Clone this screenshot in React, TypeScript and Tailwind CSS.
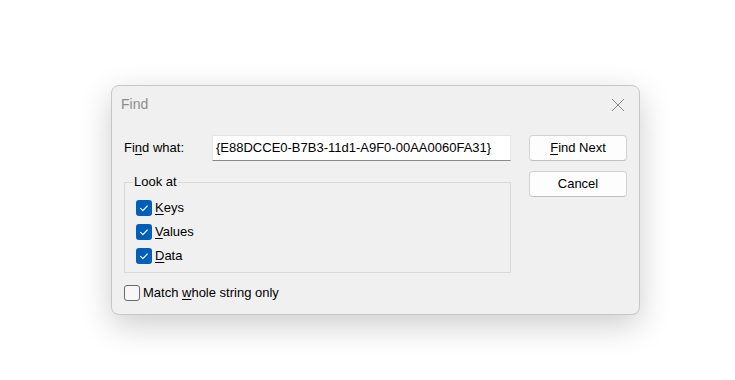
import React from "react";

function Checked() {
  return (
    <span className="w-[16px] h-[16px] rounded-[3px] bg-[#005fb8] flex items-center justify-center shrink-0">
      <svg width="16" height="16" viewBox="0 0 16 16">
        <path d="M4.6 8.4l2.3 2.3 4.4-4.7" fill="none" stroke="white" strokeWidth="1.1" strokeLinecap="round" strokeLinejoin="round" />
      </svg>
    </span>
  );
}

function CheckRow({ first, rest }: { first: string; rest: string }) {
  return (
    <div className="flex items-center h-[16px]">
      <Checked />
      <span className="ml-[3px] text-[13px] leading-[16px] text-[#000]">
        <u className="underline-offset-[2px]">{first}</u>
        {rest}
      </span>
    </div>
  );
}

export default function App() {
  return (
    <div
      className="w-[735px] h-[380px] bg-white pt-[85px] pl-[111px]"
      style={{ fontFamily: '"Liberation Sans", Arial, sans-serif' }}
    >
      <div className="w-[529px] h-[230px] bg-[#f0f0f0] border border-[#c6c6c6] rounded-[8px] shadow-[0_10px_32px_rgba(0,0,0,0.2)] flex flex-col">
        <div className="h-[35px] flex items-center justify-between pl-[9px] pr-[14px] pt-[2px]">
          <span className="text-[14px] text-[#8c8c8c]">Find</span>
          <svg width="14" height="14" viewBox="0 0 14 14">
            <path d="M1 1L13 13M13 1L1 13" stroke="#8a8a8a" strokeWidth="1" />
          </svg>
        </div>
        <div className="flex pl-[12px] pr-[12px] pt-[14px]">
          <div className="w-[387px] flex flex-col">
            <div className="flex items-center h-[26px]">
              <span className="w-[88px] text-[13px] text-[#000]">
                Fi<u className="underline-offset-[2px]">n</u>d what:
              </span>
              <div className="w-[299px] h-[26px] bg-white border border-[#e5e5e5] border-b-[#8a8a8a] flex items-center pl-[3px] text-[13px] text-[#000]">
                {"{E88DCCE0-B7B3-11d1-A9F0-00AA0060FA31}"}
              </div>
            </div>
            <div className="relative mt-[21px] h-[91px] border border-[#d9d9d9] pt-[17px] pl-[11px] flex flex-col gap-[8px]">
              <span className="absolute left-[8px] top-[-9px] px-[1px] bg-[#f0f0f0] text-[13px] leading-[16px] text-[#000]">
                Look at
              </span>
              <CheckRow first="K" rest="eys" />
              <CheckRow first="V" rest="alues" />
              <CheckRow first="D" rest="ata" />
            </div>
            <div className="flex items-center mt-[12px] h-[15px]">
              <span className="w-[16px] h-[16px] rounded-[3px] border border-[#6a6a6a] bg-[#f7f7f7] shrink-0" />
              <span className="ml-[3px] text-[13px] leading-[16px] text-[#000]">
                Match <u className="underline-offset-[2px]">w</u>hole string only
              </span>
            </div>
          </div>
          <div className="ml-[18px] w-[98px] flex flex-col gap-[10px]">
            <button className="h-[26px] w-full bg-[#fdfdfd] border border-[#d3d3d3] border-b-[#c0c0c0] rounded-[4px] text-[13px] text-[#000]">
              <u className="underline-offset-[2px]">F</u>ind Next
            </button>
            <button className="h-[26px] w-full bg-[#fdfdfd] border border-[#d3d3d3] border-b-[#c0c0c0] rounded-[4px] text-[13px] text-[#000]">
              Cancel
            </button>
          </div>
        </div>
      </div>
    </div>
  );
}
